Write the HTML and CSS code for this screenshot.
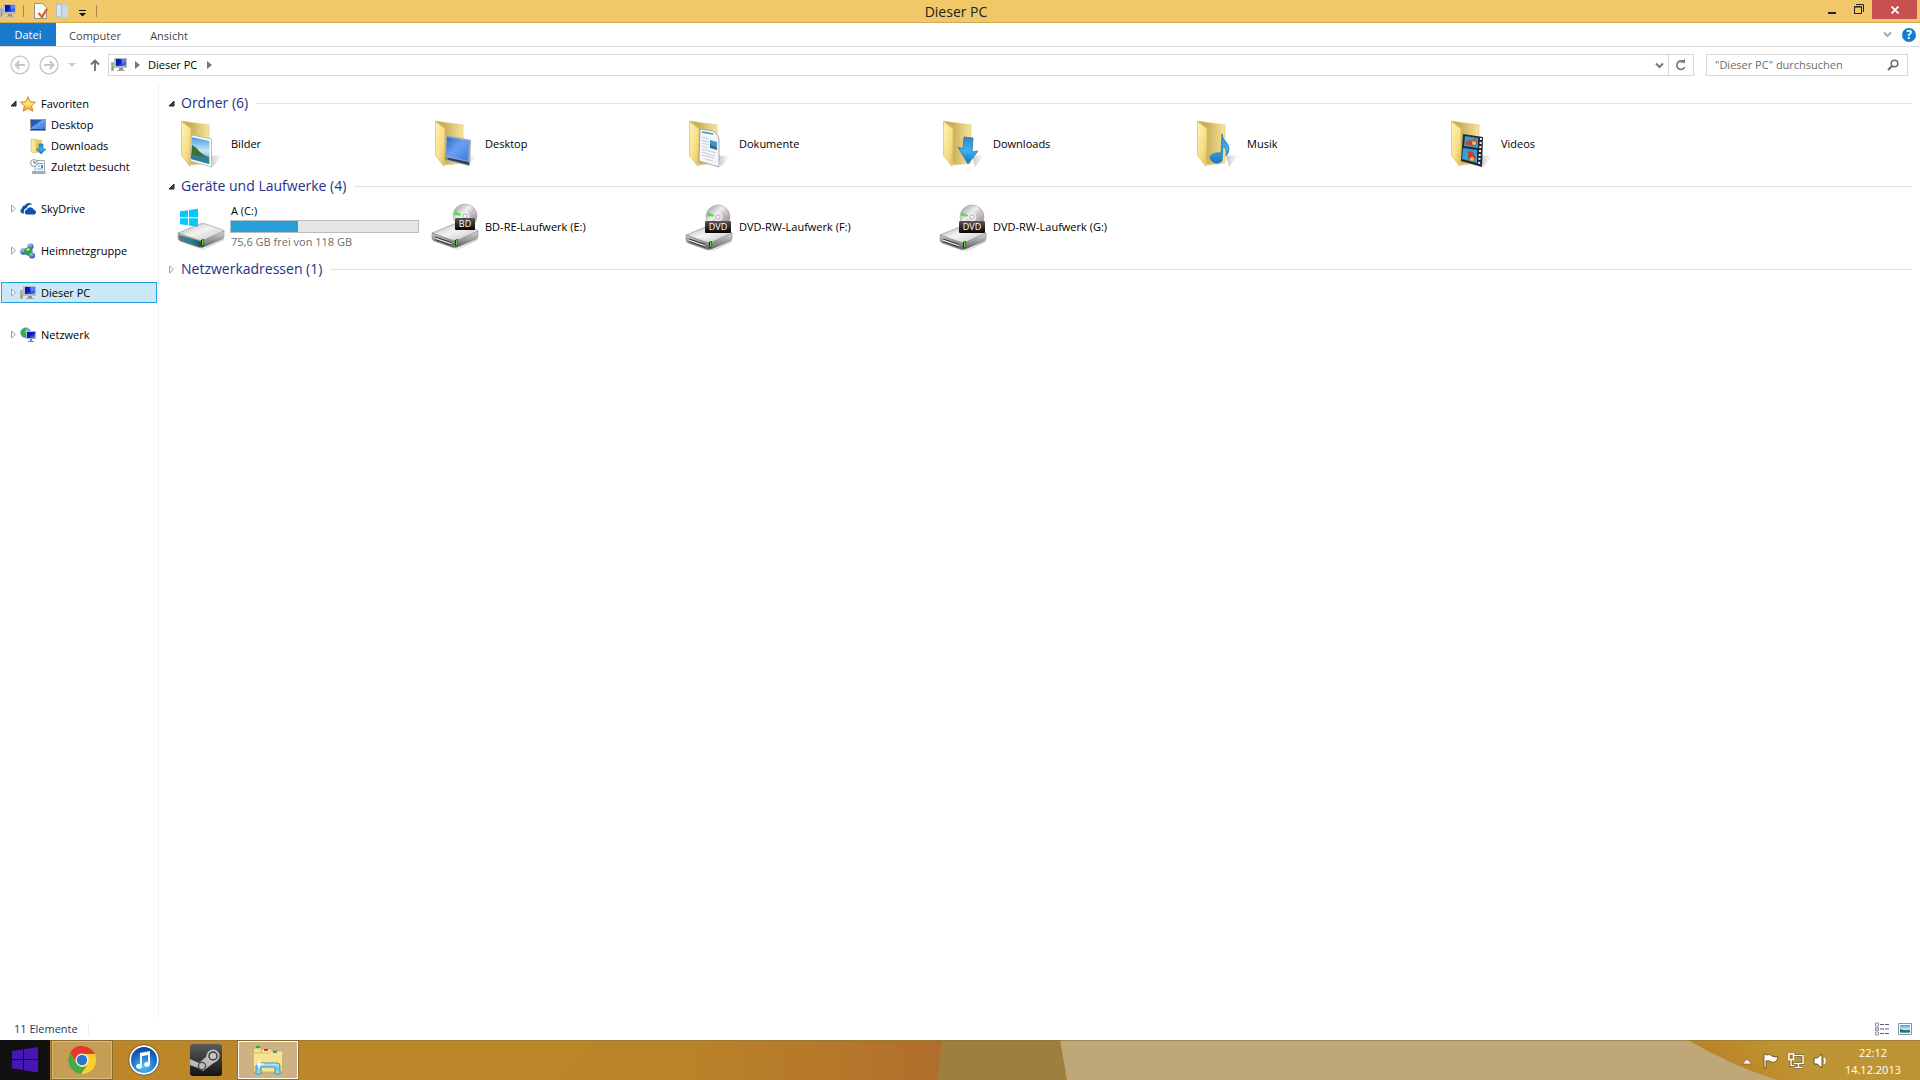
FILE: index.html
```html
<!DOCTYPE html>
<html lang="de">
<head>
<meta charset="utf-8">
<title>Dieser PC</title>
<link rel="stylesheet" href="styles.css">
</head>
<body>
<svg class="sprite" aria-hidden="true">
  <defs>
    <linearGradient id="g-flap" x1="0" y1="0" x2="1" y2="1"><stop offset="0" stop-color="#fff3b8"/><stop offset=".6" stop-color="#f7dd84"/><stop offset="1" stop-color="#e3bb55"/></linearGradient>
    <linearGradient id="g-back" x1="0" y1="0" x2="1" y2="0"><stop offset=".3" stop-color="#c9ad5a"/><stop offset="1" stop-color="#f6e59a"/></linearGradient>
    <linearGradient id="g-shade" x1="0" y1="0" x2="1" y2="0"><stop offset="0" stop-color="#999" stop-opacity=".6"/><stop offset="1" stop-color="#ccc" stop-opacity="0"/></linearGradient>
    <linearGradient id="g-sky" x1="0" y1="0" x2="0" y2="1"><stop offset="0" stop-color="#4a9be0"/><stop offset=".5" stop-color="#c4e6f8"/><stop offset="1" stop-color="#4ba0ae"/></linearGradient>
    <linearGradient id="g-screen" x1="0" y1="0" x2="1" y2="1"><stop offset="0" stop-color="#2c66bf"/><stop offset=".45" stop-color="#6aa0f2"/><stop offset="1" stop-color="#3d7ce0"/></linearGradient>
    <linearGradient id="g-mon" x1="0" y1="0" x2="1" y2="1"><stop offset="0" stop-color="#0712a6"/><stop offset=".5" stop-color="#0b1bd0"/><stop offset="1" stop-color="#5d92f0"/></linearGradient>
    <linearGradient id="g-arrow" x1="0" y1="0" x2="0" y2="1"><stop offset="0" stop-color="#2e86c8"/><stop offset=".5" stop-color="#3db1f2"/><stop offset="1" stop-color="#1474c4"/></linearGradient>
    <linearGradient id="g-top" x1="0" y1="0" x2="1" y2="1"><stop offset="0" stop-color="#aaa"/><stop offset=".45" stop-color="#f4f4f4"/><stop offset="1" stop-color="#bdbdbd"/></linearGradient>
    <linearGradient id="g-side" x1="0" y1="0" x2="0" y2="1"><stop offset="0" stop-color="#d8d8d8"/><stop offset="1" stop-color="#5f5f5f"/></linearGradient>
    <linearGradient id="g-teal" x1="0" y1="0" x2="1" y2="0"><stop offset="0" stop-color="#5d7483"/><stop offset=".5" stop-color="#23809a"/><stop offset="1" stop-color="#22404c"/></linearGradient>
    <linearGradient id="g-disc" x1="0" y1="0" x2="1" y2="1"><stop offset="0" stop-color="#8c8c8c"/><stop offset=".4" stop-color="#f0f0f0"/><stop offset=".6" stop-color="#bcbcbc"/><stop offset="1" stop-color="#858585"/></linearGradient>
    <linearGradient id="g-badge" x1="0" y1="0" x2="0" y2="1"><stop offset="0" stop-color="#5a5a5a"/><stop offset=".5" stop-color="#2b2b2b"/><stop offset="1" stop-color="#050505"/></linearGradient>
    <linearGradient id="g-star" x1="0" y1="0" x2="0" y2="1"><stop offset="0" stop-color="#ffd75a"/><stop offset=".5" stop-color="#ffe46a"/><stop offset="1" stop-color="#f59a1c"/></linearGradient>
    <radialGradient id="g-itunes" cx=".5" cy=".75" r=".7"><stop offset="0" stop-color="#4cc7f8"/><stop offset=".6" stop-color="#1c74cf"/><stop offset="1" stop-color="#123f8c"/></radialGradient>
    <linearGradient id="g-steam" x1="0" y1="0" x2="0" y2="1"><stop offset="0" stop-color="#5b5b59"/><stop offset="1" stop-color="#141414"/></linearGradient>
    <linearGradient id="g-clip" x1="0" y1="0" x2="0" y2="1"><stop offset="0" stop-color="#c5ebf8"/><stop offset=".5" stop-color="#6cc0e6"/><stop offset="1" stop-color="#a9e2f4"/></linearGradient>
    <linearGradient id="g-tan" x1="0" y1="0" x2="1" y2="0"><stop offset="0" stop-color="#b98528"/><stop offset=".35" stop-color="#b98329"/><stop offset=".75" stop-color="#b5772a"/><stop offset="1" stop-color="#af6e2b"/></linearGradient>
    <linearGradient id="g-gold" gradientUnits="userSpaceOnUse" x1="1730" y1="30" x2="1770" y2="-10"><stop offset="0" stop-color="#b9842a"/><stop offset=".6" stop-color="#bf8f2e"/><stop offset="1" stop-color="#bd9535"/></linearGradient>
    <radialGradient id="g-ball" cx=".4" cy=".3" r=".7"><stop offset="0" stop-color="#a9c6f5"/><stop offset="1" stop-color="#1c49b0"/></radialGradient>
    <radialGradient id="g-globe" cx=".4" cy=".3" r=".7"><stop offset="0" stop-color="#bfefff"/><stop offset="1" stop-color="#1673c4"/></radialGradient>
  </defs>

  <symbol id="i-pc" viewBox="0 0 16 16">
    <path d="M0 5h3v9H0z" fill="#b4b8ba"/><path d="M1 6h1v2H1z" fill="#41d33c"/><path d="M1 9h1v4H1z" fill="#8a8d8f"/>
    <path d="M3 1h13v10H3z" fill="#b9bcbf"/><path d="M5 2h10v7H5z" fill="url(#g-mon)"/><path d="M10 2h5v3l-4 2z" fill="#6f96ee" opacity=".8"/>
    <path d="M8 11h4v2H8z" fill="#8e9194"/><path d="M6 13h8v1H6z" fill="#a4a7a9"/>
  </symbol>
  <symbol id="i-star" viewBox="0 0 16 16"><path d="M8 .7l2.200 5 5.300.5-4 3.600 1.300 5.400L8 12.400l-4.800 2.800 1.300-5.400-4-3.600 5.300-.5z" fill="url(#g-star)" stroke="#d9822a"/></symbol>
  <symbol id="i-desk" viewBox="0 0 16 16"><path d="M0 2h16v12H0z" fill="#8b9db5"/><path d="M1 3h14v9H1z" fill="url(#g-screen)"/><path d="M1 3h11L1 11z" fill="#174a9e" opacity=".7"/><path d="M1 12h14v1H1z" fill="#243f68"/></symbol>
  <symbol id="i-down" viewBox="0 0 16 16"><path d="M3 1l9 1v12l-7 1z" fill="#e6c866"/><path d="M1 1l5 1v13l-5-1z" fill="#f9e69c" stroke="#d9b95b" stroke-width=".6"/><path d="M9 6h4v5h3l-5 5-5-5h3z" fill="url(#g-arrow)" stroke="#1c6fae" stroke-width=".6"/></symbol>
  <symbol id="i-recent" viewBox="0 0 16 16"><path d="M5 1.500h9.500V14H5z" fill="#f7f9fb" stroke="#9aa7b4"/><path d="M8 4.500h5M8 7h2M7 10h6" stroke="#5fa6dc"/><path d="M11 6h2v3h-2z" fill="#3c8fd0"/><path d="M2 12h13l1 3H2z" fill="#a8aeb4"/><circle cx="4" cy="4" r="3.400" fill="#fff" stroke="#8794a1"/><path d="M4 2v2h2" fill="none" stroke="#555"/></symbol>
  <symbol id="i-sky" viewBox="0 0 16 16"><path d="M2.800 12.500A2.600 2.600 0 012 7.500 3.300 3.300 0 015 4.500 4.500 4.500 0 0112.500 3.500C9 3 7 5 6.800 7.200 4.500 7.200 3 10 4.200 12.500z" fill="#0d4fb0"/><path d="M6.500 13.500a2.600 2.600 0 01.5-5 3.600 3.600 0 016.800.2 2.500 2.500 0 01.6 4.800z" fill="#0d4fb0"/></symbol>
  <symbol id="i-home" viewBox="0 0 16 16"><circle cx="10.500" cy="3.500" r="3" fill="url(#g-ball)"/><circle cx="3.500" cy="8.500" r="3.200" fill="url(#g-ball)"/><circle cx="8.500" cy="8.500" r="4.200" fill="#2fa344"/><circle cx="12" cy="12.500" r="3" fill="url(#g-ball)"/><path d="M6 7q2-3 4-1l-2 2z" fill="#c7f0c4"/></symbol>
  <symbol id="i-net" viewBox="0 0 16 16"><circle cx="5.500" cy="5.500" r="5.200" fill="url(#g-globe)"/><path d="M1 4q3-4 6-3L5 5l2 3-3 2q-3-1-3-4z" fill="#3bab45"/><path d="M6 4h10v8H6z" fill="#aeb6c2"/><path d="M7 5h8v6H7z" fill="url(#g-mon)"/><path d="M10 12h2v2h2v1H8v-1h2z" fill="#7387a8"/></symbol>
  <symbol id="i-check" viewBox="0 0 16 16"><path d="M1.500.5h8l4 4v11h-12z" fill="#fafafa" stroke="#9a9186"/><path d="M5.500 10l3.500 4 5-8" fill="none" stroke="#e2672c" stroke-width="2.400"/></symbol>
  <symbol id="i-newf" viewBox="0 0 16 16"><path d="M3 1h10v13H3z" fill="#c0cedf"/><path d="M1.500.5l5 1.500v12.500l-5-1z" fill="#d8e4f2" stroke="#9fb1c8" stroke-width=".7"/><path d="M7 4l2-2 4 1v11H7z" fill="#c9d8ea"/></symbol>

  <symbol id="i-folder" viewBox="0 0 48 48">
    <path d="M33 36l13-1-10 12z" fill="url(#g-shade)"/>
    <path d="M5 1l27 4v38l-18 2z" fill="url(#g-back)" stroke="#e2ca7c" stroke-width=".7"/>
    <path d="M4.500 1.500l9.500 7v20l-1 18-8.500-11z" fill="url(#g-flap)" stroke="#d8bd68" stroke-width=".7"/>
  </symbol>
  <symbol id="f-bilder" viewBox="0 0 48 48"><use href="#i-folder"/><path d="M14.500 15l20 4v28l-21-6z" fill="#fff" stroke="#a6b0b8" stroke-width=".8"/><path d="M15 17l17.500 4v23L14 39z" fill="url(#g-sky)"/><path d="M15 25q4 2 7 6 5 5 10 6l-18 1z" fill="#3b6f38"/><path d="M14 35l18 2v7l-18-5z" fill="#2f7f98"/></symbol>
  <symbol id="f-desktop" viewBox="0 0 48 48"><use href="#i-folder"/><path d="M15 15l25 5-1 26-25-6z" fill="#9da9ba"/><path d="M16 17l22 4-1 20-22-5z" fill="url(#g-screen)"/><path d="M14 37l24 5v3l-24-6z" fill="#29405e"/><path d="M14 37l3 .6v2l-3-.8z" fill="#5fae45"/></symbol>
  <symbol id="f-dokumente" viewBox="0 0 48 48"><use href="#i-folder"/><path d="M15 9l13 2q5 3 6 8v28l-20-6z" fill="#f4f5fb" stroke="#92979e" stroke-width=".8"/><path d="M17 12l11 2" stroke="#2fa0a8" stroke-width="1.500"/><path d="M17 17l7 2M17 20l7 2M17 23l7 2M17 26l7 2M17 29l14 4M17 32l13 4M17 35l12 3M20 39l8 2" stroke="#c9ccd8"/><path d="M25 20l7 2v7l-7-2z" fill="#3e92cc"/><path d="M25 24l7 4v2l-7-2z" fill="#2f6e78"/></symbol>
  <symbol id="f-downloads" viewBox="0 0 48 48"><use href="#i-folder"/><path d="M25 17l9 1-1 14 6-1-10 13-10-17 5 2z" fill="url(#g-arrow)" stroke="#2576b4" stroke-width=".8"/></symbol>
  <symbol id="f-musik" viewBox="0 0 48 48"><use href="#i-folder"/><path d="M29 14c1 8 7 8 7 15q0 4-3 7 1-8-3-10l-1 15q-3 3-7 2-5-2-5-6 3-5 11-4z" fill="url(#g-arrow)" stroke="#2576b4" stroke-width=".8"/></symbol>
  <symbol id="f-videos" viewBox="0 0 48 48"><use href="#i-folder"/><path d="M16 14l20 3-1 30-21-6z" fill="#262a2d"/><path d="M18 16l13 2v10l-14-2zM16 28l14 2v13l-15-4z" fill="#349fd8"/><path d="M18 23l4-3 3 1 3-3 2 5-2 3-8-1z" fill="#cf4326"/><path d="M21 31l5 1 3 6-5 4-3-5z" fill="#cb3a2c"/><circle cx="27" cy="23" r="2" fill="#f4c338"/><circle cx="25" cy="39" r="2" fill="#f4c338"/><path d="M34 18l-2 27" stroke="#eee" stroke-width="2" stroke-dasharray="2 2"/></symbol>

  <symbol id="i-body" viewBox="0 0 48 48">
    <path d="M3 38l23 8 21-11v2L26 47z" fill="#999" opacity=".4"/>
    <path d="M1 30l22-9q3-1 6 0l17 6q2 1 0 3l-19 8q-3 1-6 0z" fill="url(#g-top)" stroke="#8f8f8f" stroke-width=".6"/>
    <path d="M1 30l20 7q3 1 6 0l20-9v5q0 2-2 3l-18 8q-3 1-6 0L3 38q-2-1-2-3z" fill="url(#g-side)" stroke="#7a7a7a" stroke-width=".5"/>
  </symbol>
  <symbol id="d-hdd" viewBox="0 0 48 48"><use href="#i-body"/><path d="M2 32l20 6q3 1 5 0v5q-3 1-6 0L4 38q-2-1-2-3z" fill="url(#g-teal)"/><path d="M24 37l3-1v6l-3 1z" fill="#2a2a2a"/><path d="M25 37.300l1.500-.5v5l-1.500.5z" fill="#51e01b"/><path d="M3 8.300l8-1.100v7H3zM12 7l9-1.300v8.500h-9zM3 15.200h8v7l-8-1zM12 15.200h9v8.500l-9-1.300z" fill="#08c5fb"/></symbol>
  <symbol id="i-disc" viewBox="0 0 26 26"><circle cx="13" cy="13" r="12" fill="url(#g-disc)" stroke="#a2a2a2" stroke-width=".6"/><path d="M13 13L3 8l-1 4z" fill="#59df4c"/><path d="M13 13l9-5 2 3z" fill="#e0b3d5"/><path d="M13 13L5 19l4 4z" fill="#d9a8d2"/><circle cx="13" cy="13" r="4" fill="#d7d7d7" stroke="#f5f5f5"/><circle cx="13" cy="13" r="1.700" fill="#fff" stroke="#aaa" stroke-width=".5"/></symbol>
  <symbol id="i-optical" viewBox="0 0 48 48"><use href="#i-body"/><path d="M4 34l16 5.500M4 36.500l16 5.500" stroke="#333"/><path d="M4 35.200l16 5.500" stroke="#f0f0f0"/><path d="M24 37l3-1v6l-3 1z" fill="#2a2a2a"/><path d="M25 37.300l1.500-.5v5l-1.500.5z" fill="#51e01b"/></symbol>
  <symbol id="d-bd" viewBox="0 0 48 48"><use href="#i-optical"/><use href="#i-disc" x="21" y="0" width="26" height="26"/><rect x="24" y="15" width="20" height="12" rx="1" fill="url(#g-badge)"/></symbol>
  <symbol id="d-dvd" viewBox="0 0 48 48"><use href="#i-optical" y="2"/><use href="#i-disc" x="20" y="1" width="26" height="26"/><rect x="20" y="18" width="26" height="12" rx="1" fill="url(#g-badge)"/></symbol>
  <symbol id="t-open" viewBox="0 0 7 9"><path d="M6 2v5H1z" fill="#444" stroke="#222"/></symbol>
  <symbol id="t-closed" viewBox="0 0 7 9"><path d="M1.500 1l4 3.500-4 3.500z" fill="#fff" stroke="#a2a2a2"/></symbol>
  <symbol id="t-crumb" viewBox="0 0 5 8"><path d="M0 0l5 4-5 4z" fill="#777"/></symbol>
  <symbol id="t-chev" viewBox="0 0 9 7"><path d="M1 1.500l3.500 3.500L8 1.500" fill="none" stroke="currentColor" stroke-width="2"/></symbol>
</svg>

<div class="screen">
  <header class="titlebar">
    <div class="quick">
      <svg class="ico16"><use href="#i-pc"/></svg>
      <i class="tick"></i>
      <button class="props" aria-label="Eigenschaften"><svg class="ico16"><use href="#i-check"/></svg></button>
      <button aria-label="Neuer Ordner"><svg class="ico16"><use href="#i-newf"/></svg></button>
      <button class="more" aria-label="Symbolleiste anpassen"><svg width="7" height="8" viewBox="0 0 7 8"><path d="M0 1.500h7" stroke="#111"/><path d="M0 4h7L3.500 7.500z" fill="#111"/></svg></button>
      <i class="tick"></i>
    </div>
    <h1>Dieser PC</h1>
    <div class="controls">
      <button aria-label="Minimieren"><svg width="8" height="12" viewBox="0 0 8 12"><path d="M0 9h8v2H0z" fill="#222"/></svg></button>
      <button aria-label="Verkleinern"><svg width="10" height="10" viewBox="0 0 10 10"><path d="M.5 2.500h7v7h-7zM.5 3h7M2 .5h7.500V8" fill="none" stroke="#222"/></svg></button>
      <button class="close" aria-label="Schließen"><svg width="8" height="8" viewBox="0 0 8 8"><path d="M.5.500l7 7M7.500.500l-7 7" stroke="#fff" stroke-width="1.800"/></svg></button>
    </div>
  </header>

  <div class="ribbon">
    <button class="file">Datei</button>
    <button class="computer">Computer</button>
    <button class="view">Ansicht</button>
    <div class="ribbon-end">
      <button aria-label="Menüband erweitern"><svg class="chev light"><use href="#t-chev"/></svg></button>
      <button class="help" aria-label="Hilfe">?</button>
    </div>
  </div>

  <div class="navbar">
    <div class="history">
      <button aria-label="Zurück"><svg width="20" height="20" viewBox="0 0 20 20" fill="none" stroke="#c6c6c6"><circle cx="10" cy="10" r="8.900" stroke-width="1.300"/><path d="M15 10H6M9.500 6L5.500 10l4 4" stroke-width="2"/></svg></button>
      <button aria-label="Vorwärts"><svg width="20" height="20" viewBox="0 0 20 20" fill="none" stroke="#c6c6c6"><circle cx="10" cy="10" r="8.900" stroke-width="1.300"/><path d="M5 10h9M10.500 6l4 4-4 4" stroke-width="2"/></svg></button>
      <button aria-label="Verlauf"><svg width="8" height="4" viewBox="0 0 8 4"><path d="M0 0h8L4 4z" fill="#d0d0d0"/></svg></button>
      <button class="up" aria-label="Nach oben"><svg width="10" height="12" viewBox="0 0 10 12"><path d="M5 12V2M1 5.500l4-4 4 4" fill="none" stroke="#6d6d6d" stroke-width="1.800"/></svg></button>
    </div>
    <div class="address">
      <svg class="ico16"><use href="#i-pc"/></svg>
      <svg class="crumb"><use href="#t-crumb"/></svg>
      <a href="#pc">Dieser PC</a>
      <svg class="crumb"><use href="#t-crumb"/></svg>
      <button class="drop" aria-label="Letzte Orte"><svg class="chev"><use href="#t-chev"/></svg></button>
      <button class="reload" aria-label="Aktualisieren"><svg width="12" height="12" viewBox="0 0 12 12"><path d="M9 3.200A4.200 4.200 0 109.800 8" fill="none" stroke="#777" stroke-width="1.700"/><path d="M5 3.800h5V0z" fill="#777"/></svg></button>
    </div>
    <label class="search">
      <input type="text" placeholder="&quot;Dieser PC&quot; durchsuchen" aria-label="Suchen">
      <svg width="12" height="12" viewBox="0 0 12 12" fill="none" stroke="#6b6b6b"><circle cx="7.500" cy="4.500" r="3.300" stroke-width="1.600"/><path d="M5 7L1 11" stroke-width="2"/></svg>
    </label>
  </div>

  <div class="body">
    <nav class="sidebar">
      <section>
        <a href="#fav"><svg class="tri"><use href="#t-open"/></svg><svg class="ico16"><use href="#i-star"/></svg>Favoriten</a>
        <a class="sub" href="#desktop"><svg class="ico16"><use href="#i-desk"/></svg>Desktop</a>
        <a class="sub" href="#downloads"><svg class="ico16"><use href="#i-down"/></svg>Downloads</a>
        <a class="sub" href="#recent"><svg class="ico16"><use href="#i-recent"/></svg>Zuletzt besucht</a>
      </section>
      <section><a href="#sky"><svg class="tri"><use href="#t-closed"/></svg><svg class="ico16"><use href="#i-sky"/></svg>SkyDrive</a></section>
      <section><a href="#home"><svg class="tri"><use href="#t-closed"/></svg><svg class="ico16"><use href="#i-home"/></svg>Heimnetzgruppe</a></section>
      <section><a class="selected" href="#pc"><svg class="tri"><use href="#t-closed"/></svg><svg class="ico16"><use href="#i-pc"/></svg>Dieser PC</a></section>
      <section><a href="#net"><svg class="tri"><use href="#t-closed"/></svg><svg class="ico16"><use href="#i-net"/></svg>Netzwerk</a></section>
    </nav>

    <main class="content">
      <section>
        <h2><button><svg class="tri"><use href="#t-open"/></svg>Ordner (6)</button></h2>
        <ul class="tiles">
          <li><svg class="ico48"><use href="#f-bilder"/></svg><span>Bilder</span></li>
          <li><svg class="ico48"><use href="#f-desktop"/></svg><span>Desktop</span></li>
          <li><svg class="ico48"><use href="#f-dokumente"/></svg><span>Dokumente</span></li>
          <li><svg class="ico48"><use href="#f-downloads"/></svg><span>Downloads</span></li>
          <li><svg class="ico48"><use href="#f-musik"/></svg><span>Musik</span></li>
          <li><svg class="ico48"><use href="#f-videos"/></svg><span>Videos</span></li>
        </ul>
      </section>
      <section>
        <h2><button><svg class="tri"><use href="#t-open"/></svg>Geräte und Laufwerke (4)</button></h2>
        <ul class="tiles">
          <li><svg class="ico48"><use href="#d-hdd"/></svg>
            <div class="drive"><span>A (C:)</span><div class="usage"><div style="width:36%"></div></div><span class="free">75,6 GB frei von 118 GB</span></div></li>
          <li><svg class="ico48"><use href="#d-bd"/><text x="34" y="24" text-anchor="middle" class="badge-text">BD</text></svg><span>BD-RE-Laufwerk (E:)</span></li>
          <li><svg class="ico48"><use href="#d-dvd"/><text x="33" y="27" text-anchor="middle" class="badge-text">DVD</text></svg><span>DVD-RW-Laufwerk (F:)</span></li>
          <li><svg class="ico48"><use href="#d-dvd"/><text x="33" y="27" text-anchor="middle" class="badge-text">DVD</text></svg><span>DVD-RW-Laufwerk (G:)</span></li>
        </ul>
      </section>
      <section>
        <h2><button><svg class="tri"><use href="#t-closed"/></svg>Netzwerkadressen (1)</button></h2>
      </section>
    </main>
  </div>

  <footer class="status">
    <span>11 Elemente</span>
    <div class="views">
      <button aria-label="Details"><svg width="16" height="14" viewBox="0 0 16 14"><path d="M1.500 1h3v3h-3zM1.500 5.500h3v3h-3zM1.500 10h3v3h-3z" fill="#fff" stroke="#8b95a3"/><path d="M2.500 6.500h1v1h-1z" fill="#c22"/><path d="M6 2.500h4M11 2.500h4M6 7h4M11 7h4M6 11.500h4M11 11.500h4" stroke="#526178"/></svg></button>
      <button aria-label="Große Symbole"><svg width="14" height="12" viewBox="0 0 14 12"><path d="M.5.500h13v11H.5z" fill="#fff" stroke="#8794a5"/><path d="M2 2h10v8H2z" fill="url(#g-sky)"/><path d="M2 6q3 2 10 1v2H2z" fill="#22754d"/></svg></button>
    </div>
  </footer>

  <div class="taskbar">
    <svg class="wallpaper" viewBox="0 0 1920 40" preserveAspectRatio="none" aria-hidden="true">
      <path d="M0 0h1920v40H0z" fill="#bc8729"/>
      <path d="M597 0h345l-4 40H553z" fill="url(#g-tan)"/>
      <path d="M942 0h118l7 40H938z" fill="#9d803d"/>
      <path d="M1060 0h860v40h-853z" fill="#bfa777"/>
      <path d="M1688 0h232v40h-143q-45-14-89-40z" fill="url(#g-gold)"/>
      <path d="M0 0h1920v1H0z" fill="#8f7437" opacity=".6"/>
    </svg>
    <button class="start" aria-label="Start"><svg width="26" height="26" viewBox="0 0 26 26"><path d="M0 4l11-1.600V12H0zM12 2.200L26 0v12H12zM0 13h11v10L0 21.500zM12 13h14v12.500l-14-2.300z" fill="#4617b4"/></svg></button>
    <button class="task running" aria-label="Google Chrome"><svg width="30" height="30" viewBox="0 0 30 30"><circle cx="15" cy="15" r="14" fill="#f9d02c"/><path d="M2.900 8A14 14 0 0127.800 9H15a6 6 0 00-5.500 8.500z" fill="#df3a2d"/><path d="M2.900 8A14 14 0 0014 29l6.200-9A6.500 6.500 0 019.500 18z" fill="#48a947"/><circle cx="15" cy="15" r="6.500" fill="#f4f4f4"/><circle cx="15" cy="15" r="5.200" fill="#2f74c5"/></svg></button>
    <button class="task" aria-label="iTunes"><svg width="32" height="32" viewBox="0 0 32 32"><circle cx="16" cy="16" r="14" fill="url(#g-itunes)" stroke="#fff" stroke-width="2"/><circle cx="16" cy="16" r="15.300" fill="none" stroke="#555" stroke-width=".8"/><path d="M12 9l10-2v13a3 2.500 0 11-2-2v-7l-6 1.200V22a3 2.500 0 11-2-2z" fill="#f6fbff"/></svg></button>
    <button class="task" aria-label="Steam"><svg width="32" height="32" viewBox="0 0 32 32"><rect width="32" height="32" rx="3" fill="url(#g-steam)"/><path d="M0 15l9 4 8-7 8 6-8 6-4 3-5-3-8-3z" fill="#b9b9b9"/><circle cx="23" cy="12" r="6.500" fill="#c4c4c4"/><circle cx="23" cy="12" r="4" fill="#c4c4c4" stroke="#3a3a3a" stroke-width="1.500"/><circle cx="12" cy="22" r="3.600" fill="none" stroke="#4b4b4b" stroke-width="1.300"/></svg></button>
    <button class="task active" aria-label="Explorer"><svg width="34" height="30" viewBox="0 0 34 30"><path d="M2 3h9l1 3h17v20H4z" fill="#f2df94" stroke="#b29849" stroke-width=".7"/><path d="M11 4h10l1 3h8v19H6z" fill="#f8ebb0" stroke="#b29849" stroke-width=".7"/><path d="M2 8h16l2-2h12l-1 21H3z" fill="#f6e391" stroke="#c6a94f" stroke-width=".7"/><path d="M5 1h4v2H5z" fill="#26b42d"/><path d="M13 4h4v2h-4z" fill="#d8382d"/><path d="M22 6h4v2h-4z" fill="#2a95d8"/><path d="M5 29V21q0-3 3-3h18q3 0 3 3v8h-5v-7H10v7z" fill="url(#g-clip)" stroke="#3d94bd"/><path d="M8 12l1.500 6 5 1-5 1L8 26l-1-6-5-1 5-1z" fill="#fff" opacity=".85"/></svg></button>
    <div class="tray">
      <button class="more" aria-label="Ausgeblendete Symbole"><svg width="10" height="7" viewBox="0 0 10 7"><path d="M.5 6L5 1l4.500 5z" fill="#fff" stroke="#6b531e" stroke-width=".6"/></svg></button>
      <button aria-label="Wartungscenter"><svg width="16" height="16" viewBox="0 0 16 16"><path d="M1 1h2v1q4-1.500 6 1 3 1.500 6 .5-.5 4-3 5.500-3 1-5-.8-2-1-4-.2v7H1z" fill="#fff" stroke="#594714" stroke-width=".8"/></svg></button>
      <button aria-label="Netzwerk"><svg width="16" height="16" viewBox="0 0 16 16"><path d="M6 2.500h9v8H6M10.500 11v3M7 14.500h7M3 7v5.500h3" fill="none" stroke="#594714" stroke-width="3"/><path d="M6 2.500h9v8H6M10.500 11v3M7 14.500h7M3 7v5.500h3" fill="none" stroke="#fff" stroke-width="1.500"/><path d="M1 1h4.500v5.500H1z" fill="#8f7130" stroke="#fff" stroke-width="1.400"/></svg></button>
      <button aria-label="Lautstärke"><svg width="16" height="16" viewBox="0 0 16 16"><path d="M1 5h3l5-4v14l-5-4H1z" fill="#fff" stroke="#594714" stroke-width=".9"/><path d="M11 5q2 3 0 6" fill="none" stroke="#fff" stroke-width="1.500"/></svg></button>
      <time class="clock" datetime="2013-12-14T22:12"><span>22:12</span><span>14.12.2013</span></time>
    </div>
  </div>
</div>
</body>
</html>
```
FILE: styles.css
```css
* { box-sizing: border-box; }
body {
  margin: 0;
  background: #fff;
  color: #000;
  font: 11px/16px "Open Sans", "Noto Sans", sans-serif;
}
button {
  display: flex;
  align-items: center;
  justify-content: center;
  padding: 0;
  border: 0;
  background: none;
  color: inherit;
  font: inherit;
}
a { color: inherit; text-decoration: none; }
svg { display: block; flex: none; }
h1, h2, ul { margin: 0; padding: 0; font-weight: 400; }
.sprite { position: absolute; width: 0; height: 0; }
.ico16 { width: 16px; height: 16px; }
.ico48 { width: 48px; height: 48px; }
.badge-text { fill: #fff; font: 9px "Open Sans", sans-serif; }

.screen { display: flex; flex-direction: column; min-height: 100vh; }

/* Title bar */
.titlebar {
  display: grid;
  grid-template-columns: 1fr auto 1fr;
  height: 23px;
  background: #f0c869;
  border-bottom: 1px solid #cfa850;
}
.quick { display: flex; align-items: center; gap: 7px; }
.quick .props { margin: 0 -1px 0 2px; }
.quick .more { padding: 3px 3px 0 1px; }
.tick { width: 1px; height: 12px; background: #a58b4b; }
h1 { padding: 1px 8px 0 0; font-size: 14px; line-height: 21px; color: #222; }
.controls { display: flex; justify-content: flex-end; padding-right: 3px; }
.controls button { width: 27px; height: 18px; }
.controls .close { width: 45px; height: 19px; background: #c75050; }

/* Ribbon tabs */
.ribbon {
  display: flex;
  height: 24px;
  border-bottom: 1px solid #dadbdc;
  color: #444;
}
.ribbon > button { padding-top: 2px; }
.ribbon .file { width: 56px; padding-top: 0; background: #1979ca; color: #fff; }
.ribbon .computer { width: 78px; }
.ribbon .view { width: 70px; }
.ribbon-end { display: flex; gap: 10px; align-items: center; margin-left: auto; padding-right: 4px; }
.chev { width: 9px; height: 7px; color: #777; }
.chev.light { color: #aaa; }
.help {
  width: 14px;
  height: 14px;
  border-radius: 50%;
  background: #1979ca;
  color: #fff;
  font-size: 12px;
  font-weight: 700;
}

/* Address row */
.navbar { display: flex; gap: 12px; padding: 7px 12px 8px 10px; }
.history { display: flex; align-items: center; gap: 9px; }
.history .up { margin: 0 -4px 0 5px; }
.address { display: flex; flex: 1; align-items: center; height: 22px; padding-left: 2px; border: 1px solid #d9d9d9; }
.crumb { width: 5px; height: 8px; margin: 0 8px; }
.address a + .crumb { margin-left: 10px; }
.drop { width: 18px; margin-left: auto; }
.reload { width: 25px; height: 20px; border-left: 1px solid #d9d9d9; }
.search { display: flex; align-items: center; width: 202px; height: 22px; padding: 0 8px; border: 1px solid #d9d9d9; }
.search input { flex: 1; min-width: 0; padding: 0; border: 0; outline: 0; background: none; font: inherit; }
.search input::placeholder { color: #6d6d6d; opacity: 1; }

/* Columns */
.body { display: flex; flex: 1; }
.sidebar { width: 159px; padding: 9px 1px 0; border-right: 1px solid #f0f0f0; }
.sidebar section { margin-bottom: 21px; }
.sidebar a { display: flex; align-items: center; gap: 5px; height: 21px; padding-left: 8px; border: 1px solid transparent; }
.sidebar .sub { padding-left: 28px; }
.sidebar .selected { background: #cbe8f6; border-color: #26a0da; }
.tri { width: 7px; height: 9px; }
.sidebar .tri { margin-right: -2px; }

.content { flex: 1; padding: 9px 8px 0 9px; }
h2 { display: flex; align-items: center; gap: 8px; height: 21px; color: #1e3287; font-size: 14px; line-height: 20px; }
h2::after { content: ""; flex: 1; height: 1px; background: #e2e2e2; }
h2 button { gap: 6px; padding-bottom: 1px; }
.tiles { display: grid; grid-template-columns: repeat(auto-fill, 254px); padding: 0 0 2px 9px; list-style: none; }
.tiles li { display: flex; align-items: center; gap: 6px; height: 60px; }
.drive { display: flex; flex-direction: column; width: 189px; margin-left: -1px; padding-bottom: 2px; }
.drive span { padding-left: 1px; line-height: 16px; }
.usage { height: 13px; margin: 1px 0; border: 1px solid #bcbcbc; background: #e6e6e6; }
.usage div { height: 100%; background: #26a0da; }
.free { color: #6d6d6d; }

/* Status bar */
.status { display: flex; align-items: center; height: 23px; padding: 0 8px 0 14px; color: #1e395b; }
.status > span { padding-right: 10px; border-right: 1px solid #f0f0f0; line-height: 12px; }
.views { display: flex; align-items: center; gap: 8px; margin-left: auto; }

/* Taskbar */
.taskbar { position: relative; display: flex; gap: 2px; height: 40px; background: #bc8729; color: #fff; }
.wallpaper { position: absolute; inset: 0; width: 100%; height: 100%; }
.taskbar button, .tray { position: relative; }
.start { width: 50px; background: #111; }
.task { width: 60px; border: 1px solid transparent; }
.task.running { border-color: #d8bb84; outline: 1px solid #8a692e; background: #c69d55; margin: 1px 0; }
.task.active { border-color: #fff; outline: 1px solid #8a692e; background: #cfb283; margin: 1px 0; }
.tray { display: flex; align-items: center; gap: 9px; margin-left: auto; padding: 2px 19px 0 0; }
.tray .more { margin-right: 2px; }
.clock { display: flex; flex-direction: column; align-items: center; margin-left: 7px; line-height: 17px; }
```
